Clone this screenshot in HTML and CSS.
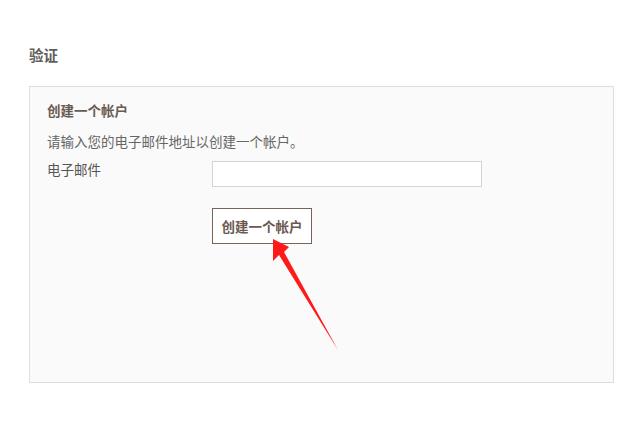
FILE: index.html
```html
<!DOCTYPE html>
<html lang="zh">
<head>
<meta charset="utf-8">
<link rel="stylesheet" href="styles.css">
</head>
<body>
<div class="page">
  <h2 class="page-title">验证</h2>
  <div class="panel">
    <h3 class="panel-title">创建一个帐户</h3>
    <p class="panel-desc">请输入您的电子邮件地址以创建一个帐户。</p>
    <div class="form-row">
      <label class="form-label">电子邮件</label>
      <input class="form-input" type="text">
    </div>
    <div class="form-actions">
      <button class="btn">创建一个帐户</button>
    </div>
  </div>
  <svg class="arrow" width="635" height="436" viewBox="0 0 635 436">
    <polygon points="273,239 289,247 284,252 338,350 279,255 273,261" fill="#ff1a1a"/>
  </svg>
</div>
</body>
</html>
```
FILE: styles.css
```css
html, body {
  margin: 0;
  padding: 0;
  background: #fff;
}
.page {
  position: relative;
  width: 635px;
  height: 436px;
  padding: 45px 21px 0 29px;
  box-sizing: border-box;
  font-family: "Noto Sans CJK SC", "Liberation Sans", sans-serif;
}
.page-title {
  margin: 0 0 21px;
  font-size: 14.5px;
  line-height: 20px;
  font-weight: bold;
  color: #5e5e5e;
}
.panel {
  border: 1px solid #dedede;
  background: #fafafa;
  padding: 13px 17px 0;
  height: 297px;
  box-sizing: border-box;
}
.panel-title {
  margin: 0 0 11px;
  font-size: 13.5px;
  line-height: 20px;
  font-weight: bold;
  color: #6b5a50;
}
.panel-desc {
  margin: 0 0 8px;
  font-size: 13.5px;
  line-height: 20px;
  color: #666;
}
.form-row {
  display: flex;
  align-items: flex-start;
}
.form-label {
  width: 165px;
  font-size: 13.5px;
  line-height: 20px;
  color: #555;
}
.form-input {
  margin: 2px 0 0;
  width: 270px;
  height: 26px;
  box-sizing: border-box;
  border: 1px solid #d4d4d4;
  background: #fff;
  padding: 0 6px;
  outline: none;
}
.form-actions {
  padding-left: 165px;
  margin-top: 21px;
}
.btn {
  width: 100px;
  height: 36px;
  box-sizing: border-box;
  border: 1px solid #76645a;
  background: #fff;
  color: #6b5a50;
  font-family: "Noto Sans CJK SC", "Liberation Sans", sans-serif;
  font-size: 13.5px;
  font-weight: bold;
  padding: 0;
  cursor: pointer;
}
.arrow {
  position: absolute;
  left: 0;
  top: 0;
  pointer-events: none;
}
```
